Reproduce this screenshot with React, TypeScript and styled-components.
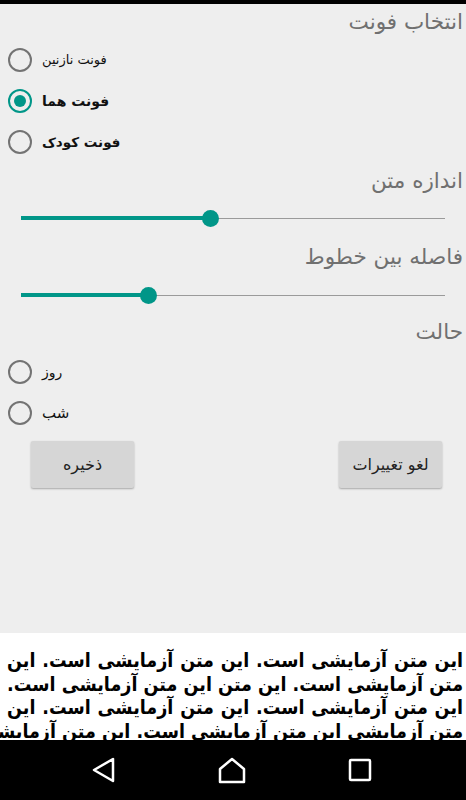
import React, { ReactElement } from "react";
import styled, { createGlobalStyle } from "styled-components";

const GlobalStyle = createGlobalStyle`
  html, body {
    margin: 0;
    padding: 0;
    background: #000;
  }
  * {
    box-sizing: border-box;
  }
`;

const teal = "#009688";

const Screen = styled.div`
  width: 466px;
  height: 800px;
  display: flex;
  flex-direction: column;
  font-family: "DejaVu Sans", "Noto Sans", sans-serif;
  overflow: hidden;
`;

const StatusStrip = styled.div`
  height: 4px;
  background: #000;
  flex-shrink: 0;
`;

const Settings = styled.div`
  flex: 1;
  background: #eeeeee;
  display: flex;
  flex-direction: column;
  padding: 3px 3px 0 8px;
`;

const SectionTitle = styled.div<{ $top?: number }>`
  direction: rtl;
  text-align: right;
  font-size: 21.5px;
  color: #707070;
  height: 30px;
  line-height: 30px;
  margin-top: ${(p) => p.$top ?? 0}px;
`;

const RadioRow = styled.label<{ $top?: number }>`
  display: flex;
  align-items: center;
  gap: 10px;
  height: 41px;
  margin-top: ${(p) => p.$top ?? 0}px;
`;

const RadioCircle = styled.span<{ $checked?: boolean }>`
  width: 24px;
  height: 24px;
  border-radius: 50%;
  border: 2.5px solid ${(p) => (p.$checked ? teal : "#737373")};
  display: flex;
  align-items: center;
  justify-content: center;
  flex-shrink: 0;

  &::after {
    content: "";
    width: 12px;
    height: 12px;
    border-radius: 50%;
    background: ${(p) => (p.$checked ? teal : "transparent")};
  }
`;

const RadioLabel = styled.span<{ $bold?: boolean; $size?: number }>`
  direction: rtl;
  font-size: ${(p) => p.$size ?? 15}px;
  font-weight: ${(p) => (p.$bold ? "bold" : "normal")};
  color: #111;
`;

const SliderBox = styled.div<{ $top: number }>`
  position: relative;
  height: 24px;
  margin: ${(p) => p.$top}px 18px 0 13px;
  display: flex;
  align-items: center;
`;

const Track = styled.div`
  width: 100%;
  height: 1px;
  background: #9a9a9a;
`;

const Fill = styled.div`
  position: absolute;
  left: 0;
  top: 50%;
  height: 4px;
  margin-top: -2px;
  background: ${teal};
`;

const Thumb = styled.div`
  position: absolute;
  top: 50%;
  width: 17px;
  height: 17px;
  margin: -8.5px 0 0 -8.5px;
  border-radius: 50%;
  background: ${teal};
`;

const Slider = ({ value, top }: { value: number; top: number }) => (
  <SliderBox $top={top}>
    <Track />
    <Fill style={{ width: `${value * 100}%` }} />
    <Thumb style={{ left: `${value * 100}%` }} />
  </SliderBox>
);

const ButtonRow = styled.div`
  display: flex;
  justify-content: space-between;
  padding: 0 21px 0 23px;
  margin-top: 8px;
`;

const Button = styled.button`
  width: 103px;
  height: 47px;
  border: none;
  border-radius: 2px;
  background: #d6d6d6;
  box-shadow: 0 1px 2px rgba(0, 0, 0, 0.3);
  font-family: "DejaVu Sans", sans-serif;
  font-size: 16px;
  color: #222;
  direction: rtl;
`;

const Preview = styled.div`
  height: 107px;
  flex-shrink: 0;
  background: #fff;
  overflow: hidden;
  direction: rtl;
  padding: 16px 3px 0 7px;
  font-size: 19.5px;
  font-stretch: condensed;
  font-weight: bold;
  line-height: 23.5px;
  color: #000;
`;

const PreviewLine = styled.div`
  text-align: justify;
  text-align-last: justify;
  white-space: nowrap;
`;

const NavBar = styled.div`
  height: 60px;
  flex-shrink: 0;
  background: #000;
  display: flex;
  align-items: center;
  justify-content: space-around;
  padding: 0 42px 0 40px;
`;

const NavIcon = styled.svg`
  width: 30px;
  height: 30px;
  fill: none;
  stroke: #fff;
  stroke-width: 2.5;
  stroke-linejoin: round;
`;

const previewLines = [
  "این متن آزمایشی است. این متن آزمایشی است. این",
  "متن آزمایشی است. این متن این متن آزمایشی است.",
  "این متن آزمایشی است. این متن آزمایشی است. این",
  "متن آزمایشی این متن آزمایشی است. این متن آزمایشی",
];

export default function App(): ReactElement {
  return (
    <Screen>
      <GlobalStyle />
      <StatusStrip />
      <Settings>
        <SectionTitle>انتخاب فونت</SectionTitle>
        <RadioRow $top={2}>
          <RadioCircle />
          <RadioLabel $size={13}>فونت نازنین</RadioLabel>
        </RadioRow>
        <RadioRow>
          <RadioCircle $checked />
          <RadioLabel $bold $size={14}>
            فونت هما
          </RadioLabel>
        </RadioRow>
        <RadioRow>
          <RadioCircle />
          <RadioLabel $bold $size={13.5}>
            فونت کودک
          </RadioLabel>
        </RadioRow>
        <SectionTitle $top={4}>اندازه متن</SectionTitle>
        <Slider value={0.448} top={10} />
        <SectionTitle $top={12}>فاصله بین خطوط</SectionTitle>
        <Slider value={0.3} top={11} />
        <SectionTitle $top={10}>حالت</SectionTitle>
        <RadioRow $top={4}>
          <RadioCircle />
          <RadioLabel $size={14}>روز</RadioLabel>
        </RadioRow>
        <RadioRow>
          <RadioCircle />
          <RadioLabel>شب</RadioLabel>
        </RadioRow>
        <ButtonRow>
          <Button>ذخیره</Button>
          <Button>لغو تغییرات</Button>
        </ButtonRow>
      </Settings>
      <Preview>
        {previewLines.map((line, i) => (
          <PreviewLine key={i}>{line}</PreviewLine>
        ))}
      </Preview>
      <NavBar>
        <NavIcon viewBox="0 0 30 30">
          <path d="M24 4 L24 26 L5 15 Z" />
        </NavIcon>
        <NavIcon viewBox="0 0 30 30">
          <path d="M3 27 L3 14 L15 4 L27 14 L27 27 Z" />
        </NavIcon>
        <NavIcon viewBox="0 0 30 30">
          <rect x="5" y="5" width="20" height="20" rx="1" />
        </NavIcon>
      </NavBar>
    </Screen>
  );
}
